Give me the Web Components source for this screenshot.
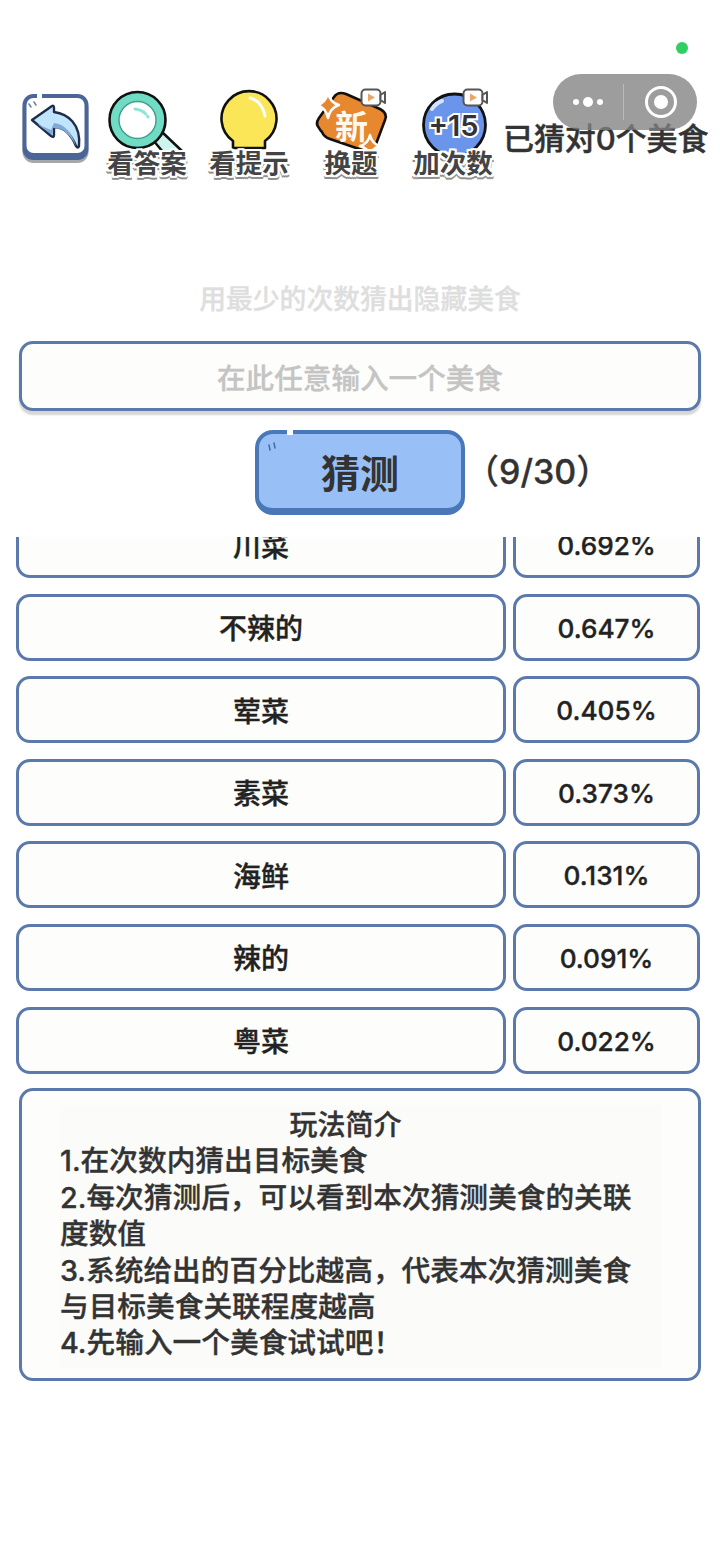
<!DOCTYPE html>
<html lang="zh">
<head>
<meta charset="utf-8">
<title>猜美食</title>
<style>
html,body{margin:0;padding:0;background:#fff}
body{font-family:Inter,"Noto Sans CJK SC","Noto Sans",sans-serif;font-weight:500;color:#333}
.tc{font-family:"Noto Sans CJK TC",sans-serif;line-height:0}
</style>
</head>
<body>
<food-game>
  <top-bar slot="top" score="已猜对0个美食">
    <back-button></back-button>
    <tool-item label="看答案">
      <svg width="102" height="64" viewBox="0 0 102 64">
        <path d="M66 44 L87 64 L67 64 L57 52Z" fill="#cdf5ee" stroke="#111" stroke-width="2.5" stroke-linejoin="round"/>
        <circle cx="41.5" cy="32" r="28" fill="#6fdcc3" stroke="#111" stroke-width="2.6"/>
        <circle cx="41.500" cy="32" r="18.5" fill="#fff" stroke="#3f9d8c" stroke-width="1.4"/>
        <path d="M39 21 Q48 22 52 29" fill="none" stroke="#8ee6d4" stroke-width="3" stroke-linecap="round" stroke-dasharray="12 3 1.500 20"/>
      </svg>
    </tool-item>
    <tool-item label="看提示">
      <svg width="102" height="64" viewBox="0 0 102 64">
        <path d="M35 60 L35 53 A27.500 27.500 0 1 1 67 53 L67 60Z" fill="#fbe658" stroke="#111" stroke-width="2.6" stroke-linejoin="round"/>
        <path d="M52 10 Q64 13 67 28" fill="none" stroke="#fff" stroke-width="3" stroke-linecap="round"/>
      </svg>
    </tool-item>
    <tool-item label="换题" class="swap">
      <svg width="102" height="68" viewBox="0 0 102 68">
        <path d="M34 9 Q38 3 46 6 L80 21 Q88 25 85 32 L76 56 Q72 66 62 62 L30 51 Q24 49 22 44 Q20 42 19 40 Q15 36 19 30Z" fill="#e7872e" stroke="#111" stroke-width="2.6" stroke-linejoin="round"/>
        <path d="M28 4 Q30 15 39 17 Q30 20 28 30 Q26 20 17 17 Q26 15 28 4Z" fill="#e7872e" stroke="#fff" stroke-width="2.5" stroke-linejoin="round"/>
        <path d="M70 47 Q72 56 80 58 Q72 60 70 68 Q68 60 60 58 Q68 56 70 47Z" fill="#e7872e" stroke="#fff" stroke-width="2.5" stroke-linejoin="round"/>
        <text x="51.500" y="51" text-anchor="middle" font-size="33" font-weight="700" fill="#fff8ee" font-family="Noto Sans CJK SC">新</text>
        <g transform="translate(60 0)">
          <rect x="1.500" y="1.500" width="19" height="16" rx="4" fill="#fff" stroke="#555" stroke-width="2"/>
          <path d="M20.500 7 L25 4 V15 L20.500 12Z" fill="#fff" stroke="#555" stroke-width="2" stroke-linejoin="round"/>
          <path d="M8 5.500 L15 9.500 L8 13.500Z" fill="#eba56b"/>
        </g>
      </svg>
    </tool-item>
    <tool-item label="加次数" class="plus">
      <svg width="102" height="68" viewBox="0 0 102 68">
        <circle cx="52.500" cy="37" r="31" fill="#6b95ea" stroke="#111" stroke-width="2.8"/>
        <path d="M30 21 Q34 15 40 13" fill="none" stroke="#d5e4fb" stroke-width="4" stroke-linecap="round"/>
        <text x="51.500" y="48" text-anchor="middle" font-size="29" font-weight="600" fill="#333" stroke="#fff" stroke-width="4" paint-order="stroke" font-family="Inter">+15</text>
        <g transform="translate(60 0)">
          <rect x="1.500" y="1.500" width="19" height="16" rx="4" fill="#fff" stroke="#555" stroke-width="2"/>
          <path d="M20.500 7 L25 4 V15 L20.500 12Z" fill="#fff" stroke="#555" stroke-width="2" stroke-linejoin="round"/>
          <path d="M8 5.500 L15 9.500 L8 13.500Z" fill="#eba56b"/>
        </g>
      </svg>
    </tool-item>
  </top-bar>
  <mini-capsule slot="overlay"></mini-capsule>
  <guess-form slot="form" tip="用最少的次数猜出隐藏美食" placeholder="在此任意输入一个美食" action="猜测" count="&#xFF08;9/30&#xFF09;"></guess-form>
  <guess-list slot="list">
    <guess-row><span>川菜</span><span slot="value">0.692%</span></guess-row>
    <guess-row><span>不辣的</span><span slot="value">0.647%</span></guess-row>
    <guess-row><span>荤菜</span><span slot="value">0.405%</span></guess-row>
    <guess-row><span>素菜</span><span slot="value">0.373%</span></guess-row>
    <guess-row><span>海鲜</span><span slot="value">0.131%</span></guess-row>
    <guess-row><span>辣的</span><span slot="value">0.091%</span></guess-row>
    <guess-row><span>粤菜</span><span slot="value">0.022%</span></guess-row>
  </guess-list>
  <rules-card slot="rules" heading="玩法简介">
    <div>1.在次数内猜出目标美食</div>
    <div>2.每次猜测后&#xFF0C;可以看到本次猜测美食的关联度数值</div>
    <div>3.系统给出的百分比越高&#xFF0C;代表本次猜测美食与目标美食关联程度越高</div>
    <div>4.先输入一个美食试试吧<span class="tc">&#xFF01;</span></div>
  </rules-card>
</food-game>
<script>
function def(name, css, html, init){
  customElements.define(name, class extends HTMLElement{
    constructor(){
      super();
      const r=this.attachShadow({mode:'open'});
      r.innerHTML='<style>'+css+'</style>'+html;
    }
    connectedCallback(){ if(init) init(this,this.shadowRoot); }
  });
}
const FONT='Inter,"Noto Sans CJK SC","Noto Sans",sans-serif';
def('food-game',
 `:host{display:block;position:relative;height:1559px;overflow:hidden;background:#fff;font-family:${FONT};font-weight:500;color:#333}
  .top{padding:88px 0 0 22px}
  .form{margin-top:99px}
  .list{margin-top:22px}
  .rules{margin-top:14px}`,
 `<div class="top"><slot name="top"></slot></div>
  <slot name="overlay"></slot>
  <div class="form"><slot name="form"></slot></div>
  <div class="list"><slot name="list"></slot></div>
  <div class="rules"><slot name="rules"></slot></div>`);
def('top-bar',
 `:host{display:flex;align-items:flex-start;height:92px}
  .score{font-size:31px;line-height:44px;margin-top:29px;color:#333;white-space:nowrap;font-weight:500;-webkit-text-stroke:.45px #333;margin-left:-1px;letter-spacing:-.1px}`,
 `<slot></slot><div class="score"></div>`,
 (h,r)=>{r.querySelector('.score').textContent=h.getAttribute('score');});
def('back-button',
 `:host{display:block;width:74px;height:80px;flex:none}
  svg{display:block}`,
 `<svg width="74" height="80" viewBox="22 88 74 80">
   <rect x="22.500" y="97" width="66" height="66" rx="11" fill="#5c5f66" opacity=".55"/>
   <rect x="22.500" y="94" width="66" height="66" rx="11" fill="#4a6596"/>
   <rect x="26.500" y="98" width="58" height="55" rx="7" fill="#fff"/>
   <rect x="37" y="92" width="5" height="7" fill="#fff"/>
   <path d="M29 104 l2 3 M34 102 l2 3" stroke="#6d84ac" stroke-width="1.600" stroke-linecap="round"/>
   <path d="M32 120 L52 106 Q54 105 54 108 L54 112 C68 114 81 124 79 146 Q78 149 76 146 C71 134 64 127 54 127 L54 135 Q54 138 51 136Z" fill="#bfe4fb" stroke="#1e2d4a" stroke-width="2.400" stroke-linejoin="round"/>
   <path d="M37 124 L52 135 L53 128 C64 128 70 135 76 146 C72 132 64 124 54 123 L51 130Z" fill="#7fa9d6"/>
  </svg>`);
def('tool-item',
 `:host{display:flex;flex-direction:column;align-items:center;width:102px;height:92px;position:relative;flex:none}
  .ico{height:60px;width:102px;position:relative}
  ::slotted(svg){display:block;position:absolute;left:0;top:0}
  .label{position:relative;font-size:26.500px;line-height:30px;color:#444;white-space:nowrap;font-weight:700;
   text-shadow:2px 0 0 #fff,-2px 0 0 #fff,0 2px 0 #fff,0 -2px 0 #fff,2px 2px 0 #fff,-2px 2px 0 #fff,2px -2px 0 #fff,-2px -2px 0 #fff,2px 4px 0 #8f8f8f,-2px 4px 0 #8f8f8f,0 4px 0 #8f8f8f}`,
 `<div class="ico"><slot></slot></div><div class="label"></div>`,
 (h,r)=>{r.querySelector('.label').textContent=h.getAttribute('label');});
def('mini-capsule',
 `:host{display:block}
  .dot{position:absolute;left:676px;top:42px;width:12px;height:12px;border-radius:50%;background:#2fd061}
  .cap{position:absolute;left:553px;top:74px;width:144px;height:56px;border-radius:28px;background:rgba(130,130,130,.78);display:flex;align-items:center}
  .more{width:70px;display:flex;justify-content:center;align-items:center;gap:4px}
  .more i{display:block;width:6px;height:6px;border-radius:50%;background:#fff}
  .more i:nth-child(2){width:10px;height:10px}
  .sep{width:1px;height:36px;background:rgba(255,255,255,.3)}
  .rec{margin-left:21px;width:32px;height:32px;border:3px solid #fff;border-radius:50%;box-sizing:border-box;display:flex;align-items:center;justify-content:center}
  .rec i{display:block;width:14px;height:14px;border-radius:50%;background:#fff}`,
 `<div class="dot"></div><div class="cap"><div class="more"><i></i><i></i><i></i></div><div class="sep"></div><div class="rec"><i></i></div></div>`);
def('guess-form',
 `:host{display:block}
  .tip{font-size:26.800px;line-height:40px;text-align:center;color:#dedede;font-weight:500;-webkit-text-stroke:.3px #dedede}
  .input{margin:22px 19px 0 19px;height:70px;box-sizing:border-box;border:3px solid #5b79ab;border-radius:14px;background:#fdfdfb;box-shadow:0 4px 2px #d6d6d6;
    display:flex;align-items:center;justify-content:center;font-size:28.600px;color:#c4c4c4;font-weight:500;-webkit-text-stroke:.3px #c4c4c4}
  .act{margin-top:19px;display:grid;grid-template-columns:1fr 210px 1fr;column-gap:0;align-items:center}
  .btn{grid-column:2;height:85px;box-sizing:border-box;border:4px solid #4a77b8;border-bottom-width:7px;border-radius:18px;background:#98bff6;
    display:flex;align-items:center;justify-content:center;font-size:39px;font-weight:700;color:#333;position:relative}
  .btn::before{content:"";position:absolute;left:28px;top:-5px;width:6px;height:6px;background:#fff}
  .btn svg{position:absolute;left:8px;top:8px}
  .count{font-size:34px;line-height:44px;color:#333;margin-bottom:1px;white-space:nowrap;font-weight:500;-webkit-text-stroke:.3px #333}`,
 `<div class="tip"></div><div class="input"></div><div class="act"><div class="btn"><svg width="12" height="10" viewBox="0 0 12 10"><path d="M2 3l1 5M7 1l1 5" stroke="#3f6ea8" stroke-width="1.500" stroke-linecap="round"/></svg><span></span></div><div class="count"></div></div>`,
 (h,r)=>{
   r.querySelector('.tip').textContent=h.getAttribute('tip');
   r.querySelector('.input').textContent=h.getAttribute('placeholder');
   r.querySelector('.btn span').textContent=h.getAttribute('action');
   r.querySelector('.count').textContent=h.getAttribute('count');
 });
def('guess-list',
 `:host{display:block;height:537px;overflow:hidden}
  .inner{display:flex;flex-direction:column;gap:15.600px;margin-top:-26px;padding:0 20px 0 16px}`,
 `<div class="inner"><slot></slot></div>`);
def('guess-row',
 `:host{display:grid;grid-template-columns:490px 187px;column-gap:7px;height:67px;flex:none;font-size:28px;color:#222;font-weight:500;-webkit-text-stroke:.35px #222}
  .c{box-sizing:border-box;border:3px solid #5b79ab;border-radius:14px;background:#fdfdfb;display:flex;align-items:center;justify-content:center}
  .v{font-size:26.200px;padding-top:2px}`,
 `<div class="c"><slot></slot></div><div class="c v"><slot name="value"></slot></div>`);
def('rules-card',
 `:host{display:block;margin:0 19px;box-sizing:border-box;height:293px;border:3px solid #5b79ab;border-radius:14px;background:#fdfdfb;padding:14px 37px 0 38px;font-size:28.700px;line-height:36.400px;color:#333;font-weight:500;-webkit-text-stroke:.35px #333}
  .in{background:#fbfbf9;padding-right:24px;height:263px;padding-top:2px;box-sizing:border-box}
  .h{text-align:center;font-size:28px;padding-right:6px}`,
 `<div class="in"><div class="h"></div><slot></slot></div>`,
 (h,r)=>{r.querySelector('.h').textContent=h.getAttribute('heading');});
</script>
</body>
</html>
